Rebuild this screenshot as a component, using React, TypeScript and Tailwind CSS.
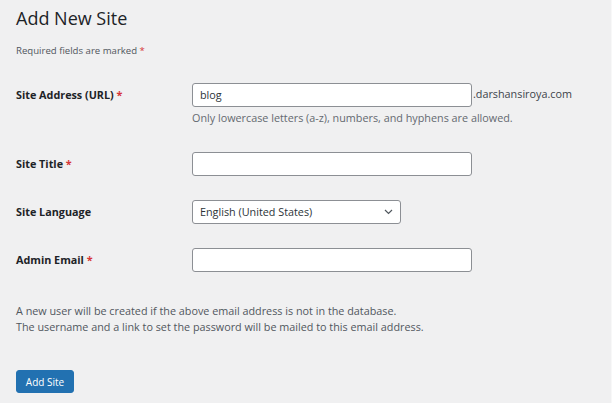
import React from "react";

const Req = () => <span className="text-[#d63638]"> *</span>;

function Row({ label, required, children, mt }: { label: string; required?: boolean; children: React.ReactNode; mt: string }) {
  return (
    <div className={`flex ${mt}`}>
      <div className="w-[176px] h-[24px] flex items-center font-bold text-[#1d2327]">
        <span>
          {label}
          {required && <Req />}
        </span>
      </div>
      <div>{children}</div>
    </div>
  );
}

export default function App() {
  return (
    <div
      className="w-[612px] h-[403px] bg-[#f0f0f1] px-4 pt-[6px] text-[10.8px] leading-[14px] text-[#3c434a] border-r border-[#f8f8f8]"
      style={{ fontFamily: '"Open Sans", "Noto Sans", sans-serif' }}
    >
      <h1 className="text-[18px] leading-[24px] font-normal text-[#1d2327]">Add New Site</h1>
      <p className="mt-[14px] text-[9.6px] text-[#50575e]">
        Required fields are marked<Req />
      </p>

      <Row label="Site Address (URL)" required mt="mt-[25px]">
        <div className="flex items-end">
          <div className="w-[280px] h-[24px] bg-white border border-[#8c8f94] rounded-[3px] flex items-center px-[7px] text-[#2c3338]">
            blog
          </div>
          <span className="ml-[1px] mb-[6px] text-[#3c434a]">.darshansiroya.com</span>
        </div>
        <p className="mt-[4px] text-[#646970]">Only lowercase letters (a-z), numbers, and hyphens are allowed.</p>
      </Row>

      <Row label="Site Title" required mt="mt-[27px]">
        <div className="w-[280px] h-[24px] bg-white border border-[#8c8f94] rounded-[3px]" />
      </Row>

      <Row label="Site Language" mt="mt-[24px]">
        <div className="w-[209px] h-[24px] bg-white border border-[#8c8f94] rounded-[3px] flex items-center justify-between pl-[7px] pr-[7px] text-[#2c3338]">
          <span>English (United States)</span>
          <svg width="9" height="6" viewBox="0 0 9 6" fill="none">
            <path d="M1 1l3.5 3.5L8 1" stroke="#50575e" strokeWidth="1.2" />
          </svg>
        </div>
      </Row>

      <Row label="Admin Email" required mt="mt-[24px]">
        <div className="w-[280px] h-[24px] bg-white border border-[#8c8f94] rounded-[3px]" />
      </Row>

      <div className="mt-[31px] leading-[16px] text-[#50575e]">
        <p>A new user will be created if the above email address is not in the database.</p>
        <p>The username and a link to set the password will be mailed to this email address.</p>
      </div>

      <button className="mt-[35px] h-[23px] w-[58px] bg-[#2271b1] border border-[#2271b1] rounded-[3px] text-white text-[10px] flex items-center justify-center">
        Add Site
      </button>
    </div>
  );
}
